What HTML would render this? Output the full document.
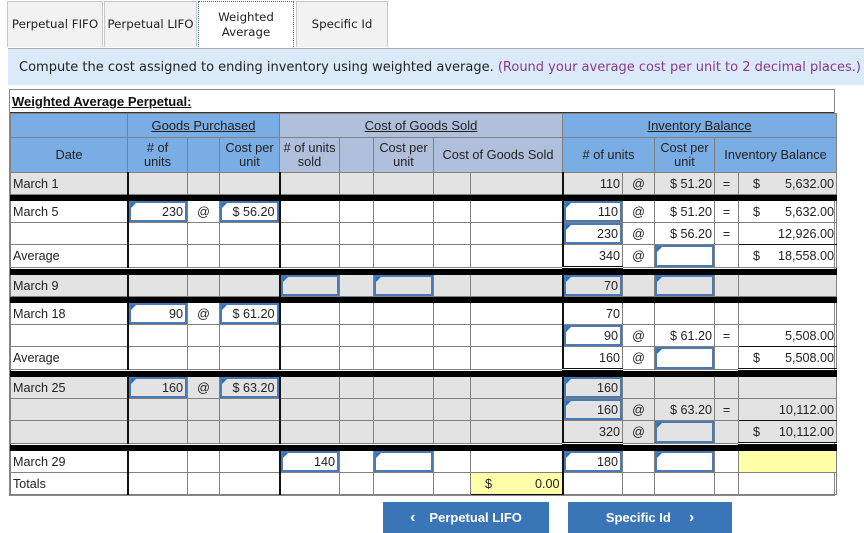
<!DOCTYPE html>
<html><head><meta charset="utf-8"><style>
body{margin:0;width:864px;height:533px;position:relative;background:#fff;font-family:"Liberation Sans",Arial,sans-serif;overflow:hidden}
.tab{position:absolute;top:1px;height:46px;background:#f2f2f2;border:1px solid #c8c8c8;border-bottom:none;font-family:"DejaVu Sans",Verdana,sans-serif;font-size:11.8px;color:#222;display:flex;align-items:center;justify-content:center;text-align:center;line-height:15px;box-sizing:border-box;white-space:nowrap}
.band{position:absolute;left:8px;top:48px;width:856px;height:37px;background:#dbeaf8;border-top:1px solid #aaa;box-sizing:border-box;font-family:"DejaVu Sans",Verdana,sans-serif;font-size:13px;color:#222;padding:11px 0 0 11px;white-space:nowrap}
.band span{color:#8b3a8b}
.wrap{position:absolute;left:9px;top:89px;width:826px;border:1px solid #888;box-sizing:border-box}
.title{height:23px;font-weight:bold;text-decoration:underline;font-size:13px;padding:4px 0 0 2px;box-sizing:border-box;color:#111;border-bottom:1px solid #333}
table{border-collapse:collapse;table-layout:fixed;width:825px;font-size:12.6px;color:#222;font-family:"Liberation Sans",Arial,sans-serif}
td{border:1px solid #808080;height:21px;padding:0 2px;position:relative;white-space:nowrap;overflow:visible}
tr.h1 td{background:#7aade3;height:23px;text-align:center;font-size:13px}
tr.h1 td.cg{background:#b0c0dc}
tr.h2 td{background:#7aade3;height:34px;text-align:center;line-height:14px;font-size:12.8px}
tr.h2 td.cg{background:#b0c0dc}
u{text-decoration:underline}
tr.g td{background:#e3e3e3}
tr.bar td{background:#000;height:5px;padding:0;border-color:#000}
.r{text-align:right}.c{text-align:center}
.bl{border-left:2px solid #111}
.in{position:absolute;left:0;top:0;right:0;bottom:0;border:2px solid #4a7ab4;box-sizing:border-box;text-align:right;padding:2px 2px 0 0;background:inherit}
.in:before{content:"";position:absolute;left:0;top:0;border-left:5px solid #2a6fc0;border-bottom:5px solid transparent}
.bal{display:flex;justify-content:space-between;padding-left:12px}
.yel{background:#ffffa8!important}
.dbl{border-bottom:3px double #111}
.btn{position:absolute;top:502px;height:31px;background:#3a75b8;color:#fff;font-weight:bold;font-size:13px;display:flex;align-items:center;justify-content:center}
</style></head><body>
<div class="tab" style="left:7px;width:96px">Perpetual FIFO</div>
<div class="tab" style="left:104px;width:93px">Perpetual LIFO</div>
<div class="tab" style="left:198px;width:96px;background:#fff;border:1px dotted #3a6fb0;border-bottom:none">Weighted<br>Average</div>
<div class="tab" style="left:296px;width:92px">Specific Id</div>
<div class="band">Compute the cost assigned to ending inventory using weighted average. <span>(Round your average cost per unit to 2 decimal places.)</span></div>
<div class="wrap">
<div class="title">Weighted Average Perpetual:</div>
<table>
<colgroup><col style="width:117px"><col style="width:60px"><col style="width:32px"><col style="width:60px"><col style="width:60px"><col style="width:34px"><col style="width:60px"><col style="width:37px"><col style="width:92px"><col style="width:60px"><col style="width:32px"><col style="width:60px"><col style="width:24px"><col style="width:98px"></colgroup>
<tr class="h1"><td></td><td colspan="3"><u>Goods Purchased</u></td><td colspan="5" class="cg"><u>Cost of Goods Sold</u></td><td colspan="5"><u>Inventory Balance</u></td></tr>
<tr class="h2"><td>Date</td><td># of<br>units</td><td></td><td class="r">Cost per<br>unit</td><td class="cg"># of units<br>sold</td><td class="cg"></td><td class="cg">Cost per<br>unit</td><td colspan="2" class="cg">Cost of Goods Sold</td><td colspan="2"># of units</td><td>Cost per<br>unit</td><td colspan="2">Inventory Balance</td></tr>
<tr class="g"><td>March 1</td><td class="bl"></td><td></td><td></td><td class="bl"></td><td></td><td></td><td></td><td></td><td class="r bl">110</td><td class="c">@</td><td class="r">$ 51.20</td><td class="c">=</td><td><div class="bal"><span>$</span><span>5,632.00</span></div></td></tr>
<tr class="bar"><td colspan="14"></td></tr>
<tr><td>March 5</td><td class="bl"><div class="in">230</div></td><td class="c">@</td><td><div class="in">$ 56.20</div></td><td class="bl"></td><td></td><td></td><td></td><td></td><td class="bl"><div class="in">110</div></td><td class="c">@</td><td class="r">$ 51.20</td><td class="c">=</td><td><div class="bal"><span>$</span><span>5,632.00</span></div></td></tr>
<tr><td></td><td class="bl"></td><td></td><td></td><td class="bl"></td><td></td><td></td><td></td><td></td><td class="bl"><div class="in">230</div></td><td class="c">@</td><td class="r">$ 56.20</td><td class="c">=</td><td class="r" style="border-bottom:1px solid #111">12,926.00</td></tr>
<tr><td>Average</td><td class="bl"></td><td></td><td></td><td class="bl"></td><td></td><td></td><td></td><td></td><td class="r bl dbl" style="border-top:1px solid #111">340</td><td class="c">@</td><td><div class="in"></div></td><td></td><td><div class="bal"><span>$</span><span>18,558.00</span></div></td></tr>
<tr class="bar"><td colspan="14"></td></tr>
<tr class="g"><td>March 9</td><td class="bl"></td><td></td><td></td><td class="bl"><div class="in"></div></td><td></td><td><div class="in"></div></td><td></td><td></td><td class="bl"><div class="in">70</div></td><td></td><td><div class="in"></div></td><td></td><td></td></tr>
<tr class="bar"><td colspan="14"></td></tr>
<tr><td>March 18</td><td class="bl"><div class="in">90</div></td><td class="c">@</td><td><div class="in">$ 61.20</div></td><td class="bl"></td><td></td><td></td><td></td><td></td><td class="r bl">70</td><td></td><td></td><td></td><td></td></tr>
<tr><td></td><td class="bl"></td><td></td><td></td><td class="bl"></td><td></td><td></td><td></td><td></td><td class="bl"><div class="in">90</div></td><td class="c">@</td><td class="r">$ 61.20</td><td class="c">=</td><td class="r" style="border-bottom:1px solid #111">5,508.00</td></tr>
<tr><td>Average</td><td class="bl"></td><td></td><td></td><td class="bl"></td><td></td><td></td><td></td><td></td><td class="r bl dbl" style="border-top:1px solid #111">160</td><td class="c">@</td><td><div class="in"></div></td><td></td><td class="dbl"><div class="bal"><span>$</span><span>5,508.00</span></div></td></tr>
<tr class="bar"><td colspan="14"></td></tr>
<tr class="g"><td>March 25</td><td class="bl"><div class="in">160</div></td><td class="c">@</td><td><div class="in">$ 63.20</div></td><td class="bl"></td><td></td><td></td><td></td><td></td><td class="bl"><div class="in">160</div></td><td></td><td></td><td></td><td></td></tr>
<tr class="g"><td></td><td class="bl"></td><td></td><td></td><td class="bl"></td><td></td><td></td><td></td><td></td><td class="bl"><div class="in">160</div></td><td class="c">@</td><td class="r">$ 63.20</td><td class="c">=</td><td class="r" style="border-bottom:1px solid #111">10,112.00</td></tr>
<tr class="g"><td></td><td class="bl"></td><td></td><td></td><td class="bl"></td><td></td><td></td><td></td><td></td><td class="r bl dbl" style="border-top:1px solid #111">320</td><td class="c">@</td><td><div class="in"></div></td><td></td><td class="dbl"><div class="bal"><span>$</span><span>10,112.00</span></div></td></tr>
<tr class="bar"><td colspan="14"></td></tr>
<tr><td>March 29</td><td class="bl"></td><td></td><td></td><td class="bl"><div class="in">140</div></td><td></td><td><div class="in"></div></td><td></td><td></td><td class="bl"><div class="in">180</div></td><td></td><td><div class="in"></div></td><td></td><td class="yel"></td></tr>
<tr><td style="height:17px">Totals</td><td class="bl"></td><td></td><td></td><td class="bl"></td><td></td><td></td><td></td><td class="yel" style="border:1px solid #111"><div class="bal"><span>$</span><span>0.00</span></div></td><td class="bl"></td><td></td><td></td><td></td><td></td></tr>
</table>
</div>
<div class="btn" style="left:383px;width:166px"><span style="font-size:16px;margin-right:14px">&#8249;</span>Perpetual LIFO</div>
<div class="btn" style="left:568px;width:164px">Specific Id<span style="font-size:16px;margin-left:18px">&#8250;</span></div>
</body></html>
